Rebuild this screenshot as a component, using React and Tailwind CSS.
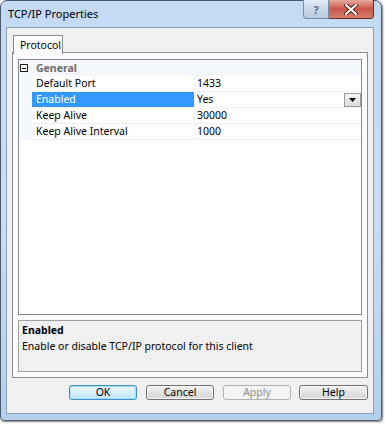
import React from "react";

function Row({ name, value, selected, dropdown }) {
  return (
    <div className="flex h-[16px]">
      <div className="w-[13px] bg-[#f3f6fb]" />
      <div
        className={
          "w-[163px] border-b border-r border-[#f0f0f0] pl-[4px] flex items-center leading-none " +
          (selected ? "bg-[#3399ff] text-white" : "")
        }
      >
        {name}
      </div>
      <div className="flex-1 border-b border-[#f0f0f0] pl-[2px] flex items-center justify-between leading-none">
        <span>{value}</span>
        {dropdown && (
          <div className="w-[17px] h-[14px] self-end border border-[#9a9a9a] bg-gradient-to-b from-[#f6f6f6] to-[#dcdcdc] flex items-center justify-center">
            <svg width="7" height="4" viewBox="0 0 7 4">
              <polygon points="0,0 7,0 3.5,4" fill="#000" />
            </svg>
          </div>
        )}
      </div>
    </div>
  );
}

function Btn({ children, def, disabled }) {
  let cls =
    "h-[15px] rounded-[3px] border flex items-center justify-center text-[10.5px] leading-none ";
  if (def)
    cls +=
      "border-[#3c8fc8] bg-gradient-to-b from-[#eaf6fd] to-[#bee6fd] text-black shadow-[inset_0_0_0_1px_#a8dcf8]";
  else if (disabled)
    cls += "border-[#adb2b5] bg-[#f4f4f4] text-[#8d8d8d]";
  else
    cls +=
      "border-[#707070] bg-gradient-to-b from-[#f2f2f2] to-[#d4d4d4] text-black shadow-[inset_0_0_0_1px_#fbfbfb]";
  return <div className={cls}>{children}</div>;
}

export default function App() {
  return (
    <div className="w-[385px] h-[424px] bg-white font-['Noto_Sans',sans-serif] text-[10.5px] text-black">
      <div className="w-[382px] h-[421px] rounded-t-[7px] rounded-b-[4px] border border-[#4a5a6e] bg-gradient-to-b from-[#c2daf3] via-[#c9def5] to-[#b4cfec] flex flex-col pl-[5px] pr-[7px] pb-[6px] shadow-[1px_1px_2px_rgba(0,0,0,0.5)]">
        <div className="h-[26px] flex items-start justify-between">
          <div className="pt-[6px] pl-[2px] text-[11px] leading-[13px] text-black">
            TCP/IP Properties
          </div>
          <div className="flex -mt-[1px]">
            <div className="w-[26px] h-[19px] rounded-bl-[4px] border border-[#7d8ea3] border-t-0 bg-gradient-to-b from-[#e3ecf6] via-[#cbd9e8] to-[#b8cbe0] flex items-center justify-center text-[11px] font-bold text-[#5b6b80] leading-none">
              ?
            </div>
            <div className="w-[45px] h-[19px] rounded-br-[4px] border border-l-0 border-t-0 border-[#6b2a22] bg-gradient-to-b from-[#e8a89c] via-[#c9564a] to-[#d2806e] flex items-center justify-center">
              <svg width="14" height="11" viewBox="0 0 14 11">
                <path d="M2 1 L12 10 M12 1 L2 10" stroke="#5a1a12" strokeWidth="4" strokeLinecap="round" />
                <path d="M2 1 L12 10 M12 1 L2 10" stroke="#ffffff" strokeWidth="2.2" strokeLinecap="round" />
              </svg>
            </div>
          </div>
        </div>
        <div className="flex-1 border border-[#8e9db0] bg-[#f0f0f0] flex flex-col">
          <div className="h-[25px] pl-[6px] pt-[7px] flex">
            <div className="w-[50px] h-[19px] border border-b-0 border-[#898c95] bg-gradient-to-b from-[#ffffff] to-[#fafafa] pl-[6px] pt-[2px] leading-[14px] relative z-10">
              Protocol
            </div>
          </div>
          <div className="mx-[5px] -mt-[1px] h-[326px] border border-[#898c95] bg-[#fbfbfb] flex flex-col px-[5px] pt-[6px] pb-[5px]">
            <div className="h-[256px] border border-[#828790] bg-white flex flex-col">
              <div className="flex h-[16px] bg-[#f3f6fb] items-center">
                <div className="w-[13px] h-full flex items-center pl-[1px]">
                  <div className="w-[8px] h-[8px] border border-[#222] bg-white flex items-center justify-center">
                    <div className="w-[4px] h-[1px] bg-black" />
                  </div>
                </div>
                <div className="pl-[4px] font-bold text-[#6d6d6d] leading-none">General</div>
              </div>
              <Row name="Default Port" value="1433" />
              <Row name="Enabled" value="Yes" selected dropdown />
              <Row name="Keep Alive" value="30000" />
              <Row name="Keep Alive Interval" value="1000" />
            </div>
            <div className="mt-[5px] flex-1 border border-[#a0a0a0] bg-[#f0f0f0] px-[3px] pt-[1px] leading-[16px]">
              <div className="font-bold">Enabled</div>
              <div>Enable or disable TCP/IP protocol for this client</div>
            </div>
          </div>
          <div className="flex justify-end pr-[5px] pt-[7px]">
            <div className="w-[68px]"><Btn def>OK</Btn></div>
            <div className="w-[68px] ml-[9px]"><Btn>Cancel</Btn></div>
            <div className="w-[68px] ml-[9px]"><Btn disabled>Apply</Btn></div>
            <div className="w-[69px] ml-[8px]"><Btn>Help</Btn></div>
          </div>
        </div>
      </div>
    </div>
  );
}
